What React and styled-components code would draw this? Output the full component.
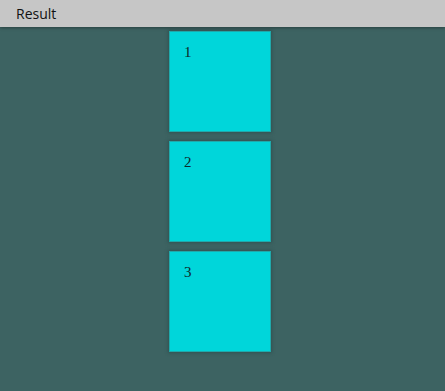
import styled, { createGlobalStyle } from "styled-components";

const GlobalStyle = createGlobalStyle`
    html, body {
        margin: 0;
        padding: 0;
        background: #3d6362;
    }
`

const PageStyled = styled.div`
    width: 445px;
    height: 391px;
    background: #3d6362;
    overflow: hidden;
`

const HeaderStyled = styled.div`
    height: 27px;
    padding-left: 16px;
    background: #c6c6c6;
    box-shadow: 0 1px 3px rgba(0, 0, 0, 0.35);
    position: relative;
    z-index: 1;

    font-family: "Open Sans", "Noto Sans", sans-serif;
    font-size: 14px;
    line-height: 27px;
    color: #111;
`

const ListStyled = styled.div`
    display: flex;
    flex-direction: column;
    align-items: center;
    gap: 9px;
    padding: 4px 5px 0 0;
`

const BoxStyled = styled.div`
    box-sizing: border-box;
    width: 102px;
    height: 101px;
    padding: 10px 0 0 14px;
    background: #00d6da;
    border: 1px solid #20a9ab;
    box-shadow: 0 0 3px 1px rgba(40, 70, 70, 0.6);

    font-family: "Liberation Serif", "DejaVu Serif", serif;
    font-size: 15px;
    line-height: 20px;
    color: #0c2a2a;
`

export default function App() {
    const items = [1, 2, 3];

    return (
        <PageStyled>
            <GlobalStyle />
            <HeaderStyled>Result</HeaderStyled>
            <ListStyled>
                {items.map((n) => (
                    <BoxStyled key={n}>{n}</BoxStyled>
                ))}
            </ListStyled>
        </PageStyled>
    );
}
